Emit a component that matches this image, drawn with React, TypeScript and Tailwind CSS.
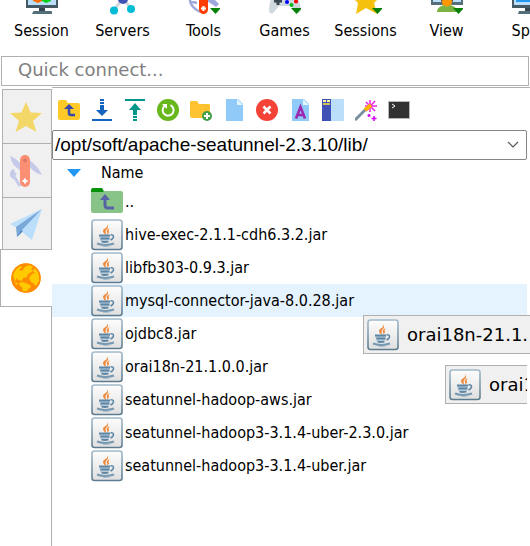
import { useState, type ReactNode } from "react";

const Drop = () => <path d="M22 25h11l-5.5 6z" fill="#078007" />;

const SessionIcon = () => (
  <svg viewBox="0 0 32 32" className="size-8" aria-hidden="true">
    <rect width="32" height="25" fill="#455a64" />
    <rect x="2" y="2" width="28" height="20" fill="#bbdefb" />
    <path d="M7 14l5-3 4 3v4l-4 2-5-2z" fill="#ff6d00" />
    <path d="M16 14l4-3 5 3v4l-5 2-4-2z" fill="#00d318" />
    <path d="M13 25h6v4h-6z" fill="#37474f" />
    <path d="M7 29q0-1 1-1h17q1 0 1 1v2H6z" fill="#546e7a" />
  </svg>
);

const ServersIcon = () => (
  <svg viewBox="0 0 32 32" className="size-8" aria-hidden="true">
    <path d="M16 15L7 27M16 15l8 11M16 15V3" stroke="#cfd8dc" strokeWidth="3" fill="none" />
    <circle cx="16" cy="16" r="5" fill="#3f51b5" />
    <circle cx="7" cy="27.500" r="4" fill="#00bcd4" />
    <circle cx="24" cy="26" r="4" fill="#00bcd4" />
  </svg>
);

const ToolsIcon = () => (
  <svg viewBox="0 0 32 32" className="size-8" aria-hidden="true">
    <path d="M2 14c-1 8 4 12 10 15M1 18l8 2" stroke="#9fa8da" strokeWidth="2.500" fill="none" />
    <path d="M20 10l11 11-3 3-9-6z" fill="#9fa8da" />
    <rect x="11" y="2" width="9" height="29" rx="4.500" fill="#ff3d00" />
    <path d="M13 25.500h5M15.500 23v5" stroke="#fff" strokeWidth="2" />
    <Drop />
  </svg>
);

const GamesIcon = () => (
  <svg viewBox="0 0 32 32" className="size-8" aria-hidden="true">
    <path d="M5 11q11-4 22 0 4 7 5 16-1 5-5 2l-5-6H10l-5 6c-3 3-5 1-5-2q0-9 5-16z" fill="#cfd8dc" />
    <path d="M9 14v8M5 18h8" stroke="#37474f" strokeWidth="3" />
    <circle cx="18" cy="19" r="2" fill="#00f" />
    <circle cx="27" cy="18.500" r="2" fill="red" />
    <circle cx="22.500" cy="22" r="2" fill="#00b818" />
    <Drop />
  </svg>
);

const StarIcon = () => (
  <svg viewBox="0 0 32 32" className="size-8" aria-hidden="true">
    <path d="M16 1l5 10 11 1-8 8 3 11-11-6-10 6 2-11-8-8 11-1z" fill="#f4c20d" />
    <Drop />
  </svg>
);

const ViewIcon = () => (
  <svg viewBox="0 0 32 32" className="size-8" aria-hidden="true">
    <rect width="32" height="22" fill="#546e7a" />
    <rect x="2" y="2" width="28" height="17" fill="#bbdefb" />
    <rect x="10" y="8" width="12" height="12" rx="3" fill="#5d4037" />
    <circle cx="16" cy="19" r="5" fill="#ff9800" />
    <path d="M6 29c0-5 5-6 7-7q3 3 6 0c3 1 7 2 7 7z" fill="#7cb342" />
    <Drop />
  </svg>
);

const SplitIcon = () => (
  <svg viewBox="0 0 32 32" className="size-8" aria-hidden="true">
    <rect width="32" height="25" fill="#455a64" />
    <rect x="2" y="2" width="28" height="20" fill="#bbdefb" />
    <rect x="4" y="4" width="24" height="15" fill="#2196f3" />
    <path d="M13 25h6v3h-6z" fill="#37474f" />
    <path d="M7 28h18v3H6z" fill="#546e7a" />
  </svg>
);

const ribbon: [string, ReactNode][] = [
  ["Session", <SessionIcon />],
  ["Servers", <ServersIcon />],
  ["Tools", <ToolsIcon />],
  ["Games", <GamesIcon />],
  ["Sessions", <StarIcon />],
  ["View", <ViewIcon />],
  ["Split", <SplitIcon />],
];

const sideTabs: [string, ReactNode][] = [
  ["Favourites", <path d="M16 1l4.700 10.500L32 12l-9 8 3.500 11L16 25 5.500 31 9 20 0 12l11.300-.5z" fill="#f3d768" />],
  [
    "Tools",
    <>
      <path d="M0 1q8 3 12 10l-1 5Q2 11 0 1z" fill="#c5cae9" />
      <path d="M18 4q10 7 14 16-8-2-14-10z" fill="#c5cae9" />
      <path d="M4 15c-4 3-3 7 1 8l5 8M2 17l4 3" stroke="#c5cae9" strokeWidth="3" fill="none" />
      <rect x="10" y="0" width="10" height="32" rx="5" fill="#fa8f73" />
      <circle cx="15" cy="5.500" r="2" fill="#dd7866" />
      <path d="M12.500 26h5M15 23.500v5" stroke="#fff" strokeWidth="2" />
    </>,
  ],
  [
    "Macros",
    <>
      <path d="M32 0L0 15l7 4z" fill="#bbdefb" />
      <path d="M32 0L6 18l1 10 6-6z" fill="#78a7d8" />
      <path d="M32 0L11 22l11 9z" fill="#bbdefb" />
      <path d="M7 28l6-6-2-1z" fill="#5688c4" />
    </>,
  ],
  [
    "Sftp",
    <>
      <circle cx="16" cy="16" r="14.500" fill="#ff8c00" />
      <path d="M3 13Q5 7 10 4l2 1-3 3 3 1 3-4 4-2 5 1-3 3 2 2-5 3-1 3-4 1-1 3-4-1-1-2-2 3 3 3-2 1z" fill="#ffca00" />
      <path d="M9 21l4-1 7 3 1 2-3 2-1 3-4-1-1-4-3-2z" fill="#ffca00" />
      <path d="M25 6q4 4 4 9v4l-3 5-3-3-2-1-2-4 3-4 3-1-2-2z" fill="#ffca00" />
      <circle cx="16" cy="16" r="14" fill="none" stroke="#ff8c00" strokeWidth="1.600" />
    </>,
  ],
];

const Folder = () => (
  <path d="M0 3q0-2 2-2h6l2 3h10q2 0 2 2v13q0 2-2 2H2q-2 0-2-2z" fill="#ffc928" />
);

const Page = () => (
  <>
    <path d="M3 0h12l5 5v17H3z" fill="#90caf9" />
    <path d="M14 0l6 6h-6z" fill="#e1f5fe" />
  </>
);

const actions: [string, ReactNode][] = [
  [
    "Parent folder",
    <>
      <Folder />
      <path d="M17 16h-4q-2 0-2-2V9" fill="none" stroke="#3949ab" strokeWidth="2.500" />
      <path d="M6 10l5-5 5 5z" fill="#3949ab" />
    </>,
  ],
  [
    "Download",
    <>
      <path d="M1 21h20" stroke="#1565c0" strokeWidth="2" />
      <path d="M9 0h4v2H9zM9 3h4v2H9zM9 6h4v5h4l-6 6-6-6h4z" fill="#1565c0" />
    </>,
  ],
  [
    "Upload",
    <>
      <path d="M1 1h20" stroke="#009688" strokeWidth="2" />
      <path d="M11 4l6 7h-4v5H9v-5H5zM9 17h4v2H9zM9 20h4v2H9z" fill="#009688" />
    </>,
  ],
  [
    "Refresh",
    <>
      <circle cx="11" cy="11" r="11" fill="#67b81c" />
      <path d="M13.500 6.200a5.500 5.500 0 1 1-6 .8" fill="none" stroke="#fff" strokeWidth="2" />
      <path d="M5 5h5v5z" fill="#fff" />
    </>,
  ],
  [
    "New folder",
    <>
      <path d="M0 3q0-1 1-1h6l2 3h10q1 0 1 1v11q0 2-2 2H2q-2 0-2-2z" fill="#ffc332" />
      <circle cx="17" cy="17" r="5" fill="#43a047" />
      <path d="M14 17h6M17 14v6" stroke="#fff" strokeWidth="2" />
    </>,
  ],
  ["New file", <Page />],
  [
    "Delete",
    <>
      <circle cx="11" cy="11" r="11" fill="#f44336" />
      <path d="M7.500 7.500l7 7M14.500 7.500l-7 7" stroke="#fff" strokeWidth="2.600" />
    </>,
  ],
  [
    "Rename",
    <>
      <Page />
      <path d="M7 19.500L11.500 8 16 19.500M8.500 16h6" fill="none" stroke="#9c27b0" strokeWidth="2.600" />
    </>,
  ],
  [
    "Show hidden files",
    <>
      <path d="M0 0h9v22H0z" fill="#3f51b5" />
      <path d="M9 0h13v22H9z" fill="#bbdefb" />
      <path d="M1 1h3v2H1zM5 1h3v2H5z" fill="#fff59d" />
      <path d="M1 5h7" stroke="#ffeb3b" strokeWidth="1.500" />
    </>,
  ],
  [
    "Permissions",
    <>
      <path d="M15 1v12M10 7h12M11 3l9 9M20 2l-9 10" stroke="#e91ee9" strokeWidth="1.500" />
      <path d="M0 21L11 10" stroke="#78909c" strokeWidth="3" />
      <path d="M10 11l6-5" stroke="#ffb300" strokeWidth="4" />
      <path d="M19 17v5M16.500 19.500h5M14 15v3M12.500 16.500h3" stroke="#d500f9" strokeWidth="1.500" />
    </>,
  ],
  [
    "Terminal",
    <>
      <path d="M.5 2.500h21v17H.5z" fill="#323232" stroke="#b8b8b8" />
      <path d="M4 5l3 2-3 2" fill="none" stroke="#fff" />
    </>,
  ],
];

const files = [
  "hive-exec-2.1.1-cdh6.3.2.jar",
  "libfb303-0.9.3.jar",
  "mysql-connector-java-8.0.28.jar",
  "ojdbc8.jar",
  "orai18n-21.1.0.0.jar",
  "seatunnel-hadoop-aws.jar",
  "seatunnel-hadoop3-3.1.4-uber-2.3.0.jar",
  "seatunnel-hadoop3-3.1.4-uber.jar",
];

const JarIcon = () => (
  <svg viewBox="0 0 32 32" className="size-8 shrink-0" aria-hidden="true">
    <defs>
      <linearGradient id="jar" x1="0" y1="0" x2="0" y2="1">
        <stop offset="0" stopColor="#fdfdfd" />
        <stop offset="1" stopColor="#dfdfe0" />
      </linearGradient>
      <linearGradient id="edge" x1="0" y1="0" x2="0" y2="1">
        <stop offset="0" stopColor="#a3bacb" />
        <stop offset="1" stopColor="#5d7b8f" />
      </linearGradient>
    </defs>
    <rect x="1" y="1" width="30" height="29.500" rx="2.500" fill="url(#jar)" stroke="url(#edge)" strokeWidth="1.600" />
    <path d="M16 5c2 4-4 4-4 7 0 2 2 3 3 4 0-2-1-3 0-5 2-2 3-3 1-6z" fill="#f0893a" />
    <path d="M19 9c-3 1-4 3-3 4 1 1 0 2-1 3 2-1 3-2 3-3-1-2 0-3 1-4z" fill="#f0893a" />
    <path d="M8 16h11l-1 5q-1 2-4 2-4 0-5-2z" fill="#b9cbd8" />
    <path d="M8 16.500h11M9.500 19.500h9M10.500 22.500q3 1 7 0" fill="none" stroke="#5d86a5" strokeWidth="1.800" />
    <path d="M19.500 16c4-1 4 3 0 5" fill="none" stroke="#5d86a5" strokeWidth="1.500" />
    <path d="M6 24.500q8 3 17 0" fill="none" stroke="#7899b1" strokeWidth="2" />
    <path d="M12 27.500q5 .5 8-1" fill="none" stroke="#a9bfce" />
  </svg>
);

const UpFolderIcon = () => (
  <svg viewBox="0 0 32 32" className="size-8 shrink-0" aria-hidden="true">
    <path d="M0 7V4q0-2 2-2h9l3 5z" fill="#079307" />
    <path d="M0 6h12l1-1h17q2 0 2 2v18q0 2-2 2H2q-2 0-2-2z" fill="#88c488" />
    <path d="M23 22h-6q-3 0-3-3v-7" fill="none" stroke="#5763a5" strokeWidth="3" />
    <path d="M9 14l5-6 5 6z" fill="#5763a5" />
  </svg>
);

const DragGhost = ({ place }: { place: string }) => (
  <div className={`absolute flex h-[39px] items-center gap-2 overflow-hidden border border-[#b0b0b0] bg-[#f0f0f0] pl-[3px] font-['DejaVu_Sans',sans-serif] text-[18px] whitespace-nowrap ${place}`}>
    <JarIcon />
    <span>orai18n-21.1.</span>
  </div>
);

export default function App() {
  const [tab, setTab] = useState(3);
  const [selected, setSelected] = useState(2);

  return (
    <div className="relative flex min-h-screen flex-col overflow-hidden bg-white font-['DejaVu_Sans_Condensed','DejaVu_Sans',sans-serif] text-[16px] text-black">
      <nav className="flex h-14 overflow-hidden pl-px" aria-label="Main toolbar">
        {ribbon.map(([label, icon]) => (
          <button key={label} className="-mt-[17px] flex w-[81px] shrink-0 flex-col items-center gap-1 leading-6">
            {icon}
            <span>{label}</span>
          </button>
        ))}
      </nav>

      <input
        aria-label="Quick connect"
        placeholder="Quick connect..."
        className="mx-px h-[30px] border border-[#b0b0b0] bg-white px-4 pb-1 font-['DejaVu_Sans',sans-serif] text-[18px] placeholder:text-[#808080]"
      />

      <div className="flex flex-1 pt-px">
        <div role="tablist" aria-label="Sidebar" className="flex w-[52px] shrink-0 flex-col pt-0.5">
          {sideTabs.map(([label, icon], i) => (
            <button
              key={label}
              role="tab"
              aria-label={label}
              aria-selected={tab === i}
              onClick={() => setTab(i)}
              className={
                tab === i
                  ? "-mt-0.5 flex h-[58px] items-center border-y border-l border-[#b0b0b0] bg-white pl-[9px]"
                  : "ml-0.5 flex h-[54px] items-center border-t border-r border-l border-[#b0b0b0] bg-[#f0f0f0] pl-[7px]"
              }
            >
              <svg viewBox="0 0 32 32" className="size-8" aria-hidden="true">
                {icon}
              </svg>
            </button>
          ))}
          <div className="flex-1 border-r border-[#b0b0b0]" />
        </div>

        <main className="min-w-0 flex-1 border-t border-[#b0b0b0] pr-[3px]">
          <div role="toolbar" aria-label="File actions" className="flex gap-[11px] pt-[11px] pb-[9px] pl-1.5">
            {actions.map(([label, icon]) => (
              <button key={label} aria-label={label} title={label} className="shrink-0">
                <svg viewBox="0 0 22 22" className="size-[22px]" aria-hidden="true">
                  {icon}
                </svg>
              </button>
            ))}
          </div>

          <div className="grid items-center">
            <select
              aria-label="Remote path"
              className="col-start-1 row-start-1 h-[30px] w-full appearance-none rounded-xs border border-[#858585] bg-white pl-0.5 font-['Liberation_Sans',sans-serif] text-[19px]"
            >
              <option>/opt/soft/apache-seatunnel-2.3.10/lib/</option>
            </select>
            <svg viewBox="0 0 12 8" className="pointer-events-none col-start-1 row-start-1 mr-2 h-2 w-3 justify-self-end" aria-hidden="true">
              <path d="M1 1l5 5 5-5" fill="none" stroke="#555" strokeWidth="1.200" />
            </svg>
          </div>

          <table className="w-full border-collapse text-left">
            <thead>
              <tr>
                <th className="h-[25px] p-0 font-normal">
                  <button className="flex items-center gap-5 pl-[15px] leading-6">
                    <svg viewBox="0 0 14 8" className="h-2 w-[14px]" aria-hidden="true">
                      <path d="M0 0h14L7 8z" fill="#2196f3" />
                    </svg>
                    Name
                  </button>
                </th>
              </tr>
            </thead>
            <tbody>
              <tr>
                <td className="h-[33px] p-0">
                  <div className="flex items-center gap-0.5 pl-[39px]">
                    <UpFolderIcon />
                    <span>..</span>
                  </div>
                </td>
              </tr>
              {files.map((name, i) => (
                <tr key={name} onClick={() => setSelected(i)} className={selected === i ? "bg-[#e5f3ff]" : "bg-white"}>
                  <td className="h-[33px] p-0">
                    <div className="flex items-center gap-0.5 pl-[39px] whitespace-nowrap">
                      <JarIcon />
                      <span>{name}</span>
                    </div>
                  </td>
                </tr>
              ))}
            </tbody>
          </table>
        </main>
      </div>

      <DragGhost place="top-[315px] right-[-2px] left-[363px]" />
      <DragGhost place="top-[365px] right-[3px] left-[445px] border-r-0" />
    </div>
  );
}
